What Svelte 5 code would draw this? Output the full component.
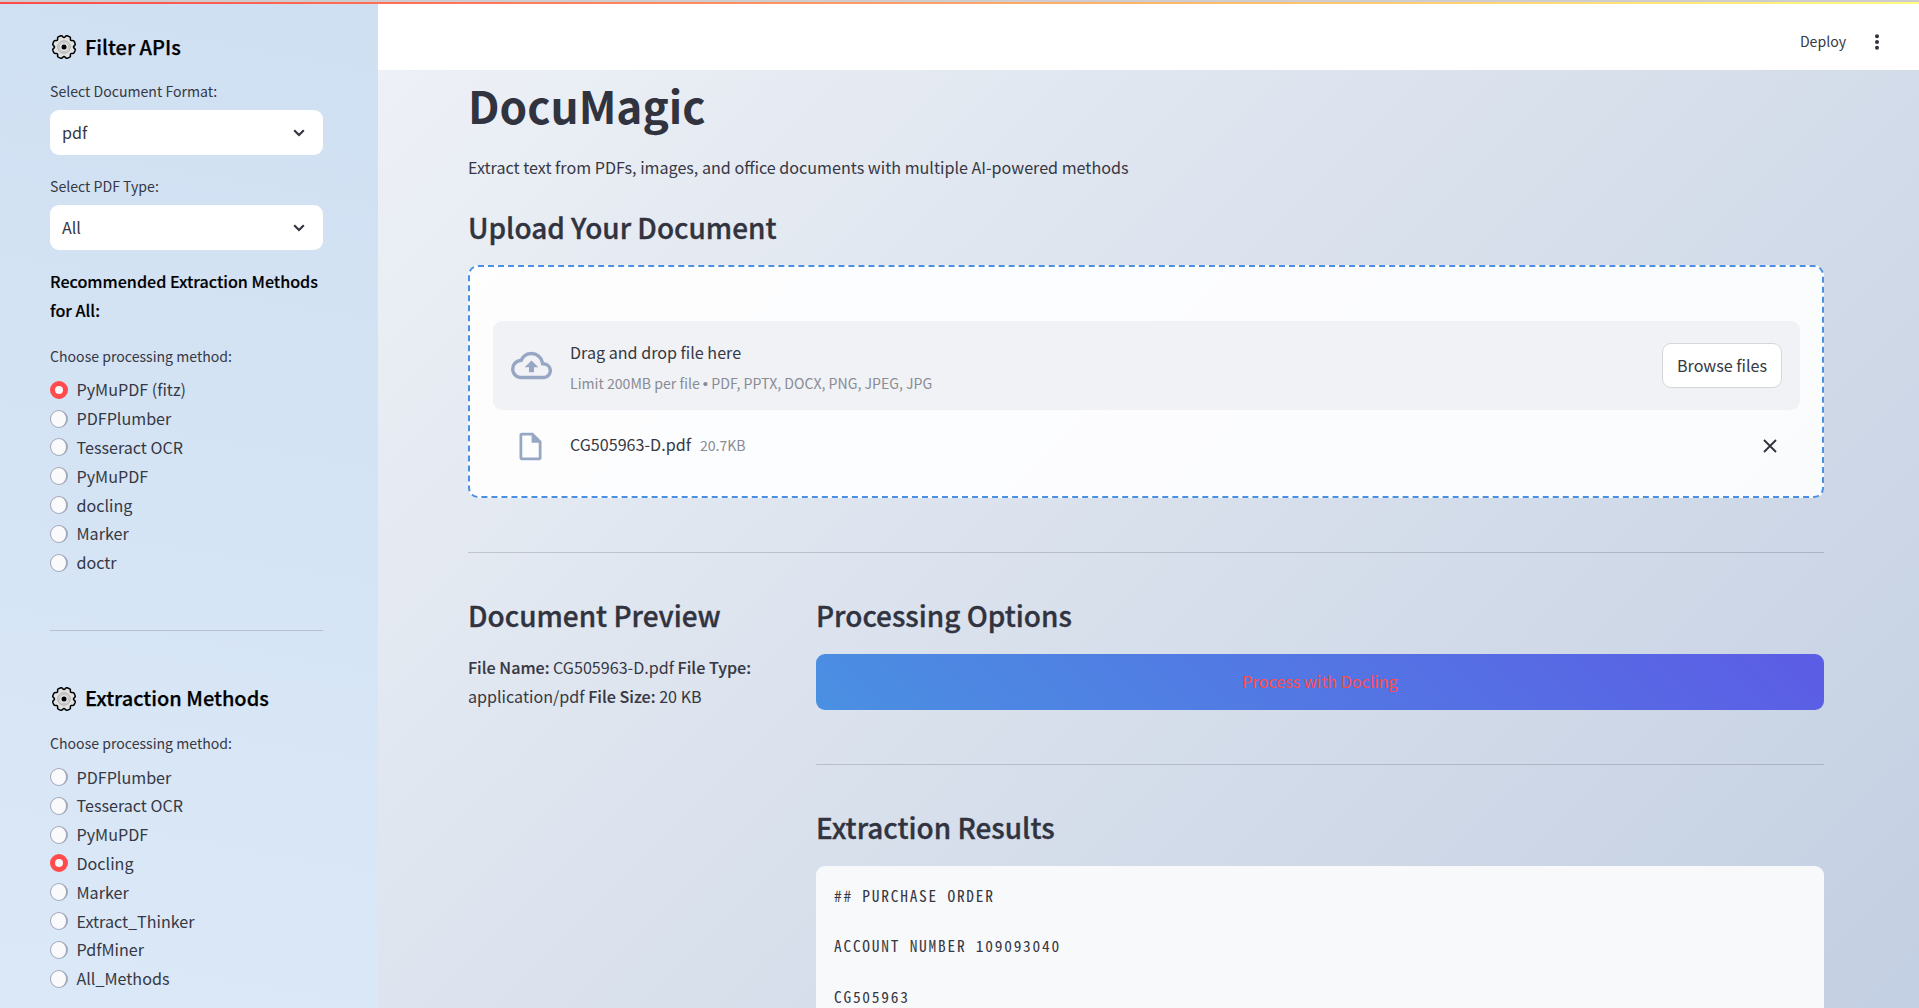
<script>
  const filterMethods = ['PyMuPDF (fitz)', 'PDFPlumber', 'Tesseract OCR', 'PyMuPDF', 'docling', 'Marker', 'doctr'];
  const extractionMethods = ['PDFPlumber', 'Tesseract OCR', 'PyMuPDF', 'Docling', 'Marker', 'Extract_Thinker', 'PdfMiner', 'All_Methods'];
  const selects = [
    { label: 'Select Document Format:', value: 'pdf' },
    { label: 'Select PDF Type:', value: 'All' }
  ];
  let filterChoice = $state('PyMuPDF (fitz)');
  let extractionChoice = $state('Docling');
  const result = '## PURCHASE ORDER\n\nACCOUNT NUMBER 109093040\n\nCG505963';

  // Scalloped outline of the gear: eight lobes with notches between them.
  const gear = Array.from({ length: 96 }, (_, i) => {
    const a = (i / 96) * Math.PI * 2;
    const r = 10.5 + 1.1 * Math.tanh(2.6 * (Math.cos(8 * a + Math.PI) + 0.5));
    return `${i ? 'L' : 'M'}${(13 + r * Math.cos(a)).toFixed(2)} ${(13 + r * Math.sin(a)).toFixed(2)}`;
  }).join('') + 'Z';
</script>

{#snippet gearIcon()}
  <svg class="gear" viewBox="0 0 26 26">
    <path d={gear} fill="#e2e2e2" stroke="#000" stroke-width="1.5" />
    <circle cx="13" cy="13" r="6.2" fill="none" stroke="#8a8a8a" stroke-width=".7" />
    <circle cx="13" cy="13" r="4.6" fill="none" stroke="#aaa" stroke-width=".6" />
    <circle cx="13" cy="13" r="2.5" fill="#000" />
  </svg>
{/snippet}

{#snippet radios(items, chosen, pick)}
  <div class="radios">
    {#each items as item}
      <button class="radio" onclick={() => pick(item)}>
        <span class="dot" class:on={item === chosen}></span>
        <span>{item}</span>
      </button>
    {/each}
  </div>
{/snippet}

<div class="app">
  <div class="strip"></div>
  <div class="body">
    <aside>
      <h3>{@render gearIcon()}<span>Filter APIs</span></h3>
      {#each selects as s}
        <div class="field">
          <div class="label">{s.label}</div>
          <div class="select">
            <span>{s.value}</span>
            <svg width="12" height="8" viewBox="0 0 12 8"><path d="M1.2 1.2 6 6l4.800-4.800" fill="none" stroke="#31333f" stroke-width="2.1" /></svg>
          </div>
        </div>
      {/each}
      <p class="recommended">Recommended Extraction Methods<br />for All:</p>
      <div class="label">Choose processing method:</div>
      {@render radios(filterMethods, filterChoice, (v) => (filterChoice = v))}
      <hr />
      <h3>{@render gearIcon()}<span>Extraction Methods</span></h3>
      <div class="label second">Choose processing method:</div>
      {@render radios(extractionMethods, extractionChoice, (v) => (extractionChoice = v))}
    </aside>

    <div class="page">
      <header>
        <span>Deploy</span>
        <svg width="6" height="18" viewBox="0 0 6 18" fill="#31333f"><circle cx="3" cy="3.300" r="2" /><circle cx="3" cy="9" r="2" /><circle cx="3" cy="14.700" r="2" /></svg>
      </header>
      <main>
        <h1>DocuMagic</h1>
        <p class="intro">Extract text from PDFs, images, and office documents with multiple AI-powered methods</p>
        <h2>Upload Your Document</h2>
        <section class="uploader">
          <div class="dropzone">
            <svg class="cloud" viewBox="0 0 24 24"><path fill="#97a6c3" d="M19.350 10.040A7.490 7.490 0 0 0 12 4C9.110 4 6.600 5.640 5.350 8.040A5.994 5.994 0 0 0 0 14c0 3.310 2.690 6 6 6h13c2.760 0 5-2.240 5-5 0-2.640-2.050-4.780-4.650-4.960zM19 18H6c-2.210 0-4-1.790-4-4 0-2.050 1.530-3.760 3.560-3.970l1.070-.11.5-.95A5.469 5.469 0 0 1 12 6c2.620 0 4.880 1.860 5.390 4.430l.3 1.500 1.530.11A2.980 2.980 0 0 1 22 15c0 1.650-1.350 3-3 3zM8 13h2.550v3h2.900v-3H16l-4-4z" /></svg>
            <div class="instructions">
              <div class="big">Drag and drop file here</div>
              <div class="small">Limit 200MB per file <span class="bullet">•</span> PDF, PPTX, DOCX, PNG, JPEG, JPG</div>
            </div>
            <button class="browse">Browse files</button>
          </div>
          <div class="file">
            <svg class="doc" viewBox="0 0 24 24"><path fill="#97a6c3" fill-rule="evenodd" d="M5.600 2h8.200L20 8.200v12.200c0 .9-.7 1.600-1.600 1.600H5.600c-.9 0-1.600-.7-1.600-1.600V3.600C4 2.700 4.700 2 5.600 2zM6 4v16h12V9.200h-5.200V4z" /></svg>
            <span class="name">CG505963-D.pdf</span>
            <span class="size">20.7KB</span>
            <svg class="close" width="14" height="14" viewBox="0 0 14 14"><path d="M1 1l12 12M13 1 1 13" stroke="#31333f" stroke-width="1.900" /></svg>
          </div>
        </section>
        <hr />
        <div class="columns">
          <section>
            <h2>Document Preview</h2>
            <p class="meta"><b>File Name:</b> CG505963-D.pdf <b>File Type:</b><br />application/pdf <b>File Size:</b> 20 KB</p>
          </section>
          <section>
            <h2>Processing Options</h2>
            <button class="process">Process with Docling</button>
            <hr />
            <h2>Extraction Results</h2>
            <pre>{result}</pre>
          </section>
        </div>
      </main>
    </div>
  </div>
</div>

<style>
  :global(body) { margin: 0; overflow: hidden; }
  .app {
    box-sizing: border-box; width: 100vw; height: 100vh; overflow: hidden;
    display: flex; flex-direction: column;
    font-family: "Noto Sans CJK SC", "Noto Sans", sans-serif;
    font-size: 16.130px; line-height: 28.800px; color: #363844;
    background: linear-gradient(135deg, #f5f7fa 0%, #c3cfe2 100%);
  }
  .strip { flex: none; height: 2px; border-top: 2px solid #cfcccf; background: linear-gradient(90deg, #ff4b4b, #fffd80); }
  .body { flex: 1; min-height: 0; display: flex; }
  h1, h2, h3, p, pre { margin: 0; }
  button { font: inherit; color: inherit; }
  hr { border: 0; border-bottom: 1px solid rgba(49, 51, 63, 0.2); margin: 0; }

  aside {
    box-sizing: border-box; flex: none; width: 378px; padding: 26px 55px 0 50px; overflow: hidden;
    background: linear-gradient(190deg, #cfe0f2, #dbe8f7);
  }
  h3 {
    display: flex; align-items: center; gap: 8px; height: 34px; color: #000; white-space: nowrap;
    font-size: 20px; font-weight: 500; -webkit-text-stroke: 0.250px currentColor;
  }
  h3 + .field { margin-top: 15px; }
  .gear { flex: none; width: 26px; height: 26px; margin-left: 1px; }
  .label { height: 25px; line-height: 25px; font-size: 14.100px; }
  .field { margin-top: 14px; height: 81px; }
  .select {
    box-sizing: border-box; height: 45px; margin-top: 6px; padding: 0 18px 0 12px; border-radius: 9px; background: #fff;
    display: flex; align-items: center; justify-content: space-between;
  }
  .recommended { margin: 12px 0 19px; color: #000; font-weight: 500; white-space: nowrap; -webkit-text-stroke: 0.150px currentColor; }
  .radios { display: flex; flex-direction: column; margin-top: 6.800px; }
  .radio { display: flex; align-items: center; gap: 8.500px; height: 28.800px; padding: 0; border: 0; background: none; text-align: left; }
  .dot { box-sizing: border-box; width: 18px; height: 18px; border-radius: 50%; background: #fafafc; border: 1px solid #a0a8b8; border-right-width: 2px; }
  .dot.on { border: 5.500px solid #ff4b4b; }
  aside hr { margin: 53px 0 50.600px; }
  .second { margin-top: 15.200px; }

  .page { flex: 1; min-width: 0; display: flex; flex-direction: column; }
  header {
    box-sizing: border-box; flex: none; height: 66px; padding: 24px 39px 0 0; background: #fff;
    display: flex; align-items: flex-start; justify-content: flex-end; gap: 28px; font-size: 14.100px;
  }
  header svg { margin-top: 5px; }
  header span { line-height: 27px; }
  main { padding: 5px 95px 0 90px; }
  h1, h2 { color: #31333f; }
  h1 { height: 64px; line-height: 61px; font-size: 44.200px; font-weight: 700; }
  .intro { height: 29px; margin-top: 14px; }
  h2 {
    height: 38px; line-height: 37px; font-size: 27.950px; font-weight: 500; white-space: nowrap;
    -webkit-text-stroke: 0.350px currentColor;
  }
  .intro + h2 { margin-top: 27px; }
  .uploader {
    box-sizing: border-box; height: 233px; margin-top: 18px; padding: 54px 22px 0 23px;
    border: 2px dashed #4a90e2; border-radius: 10px; background: rgba(255, 255, 255, 0.9);
  }
  .dropzone { box-sizing: border-box; height: 89px; padding: 0 18px; border-radius: 9px; background: #f0f2f6; display: flex; align-items: center; }
  .cloud { width: 41px; height: 41px; }
  .instructions { flex: 1; margin-left: 18px; padding-top: 4px; }
  .small, .size { font-size: 14.100px; color: #8a8b93; }
  .small { height: 30px; line-height: 32px; }
  .bullet { font-family: "Liberation Sans", sans-serif; font-size: 15px; line-height: 1; }
  .browse { width: 120px; height: 45px; padding: 0; border: 1px solid #d6d6da; border-radius: 9px; background: #fff; }
  .file { display: flex; align-items: center; height: 72px; padding: 0 23px 0 21px; }
  .doc { width: 33px; height: 33px; }
  .name { margin-left: 23px; padding-bottom: 3px; }
  .size { margin-left: 9px; padding-bottom: 1px; }
  .close { margin-left: auto; }
  main > hr { margin: 54px 0 44px; }
  .columns { display: grid; grid-template-columns: 294px 1008px; gap: 54px; }
  .meta { margin-top: 18px; white-space: nowrap; }
  .meta b { font-weight: 500; -webkit-text-stroke: 0.150px currentColor; }
  .process {
    width: 100%; height: 56px; margin-top: 19px; padding: 0 0 1px; border: 0; border-radius: 9px; color: #ff4b4b; display: block;
    background: linear-gradient(45deg, #4a90e2, #5c5ce5);
  }
  .columns hr { margin: 54px 0 44px; }
  pre {
    box-sizing: border-box; height: 400px; margin-top: 19px; padding: 17px 18px; border-radius: 9px; background: #f8f9fb;
    font-family: "Noto Sans Mono CJK SC", "Liberation Mono", monospace; font-size: 15.400px; line-height: 25.200px; letter-spacing: 1.760px;
  }
</style>
